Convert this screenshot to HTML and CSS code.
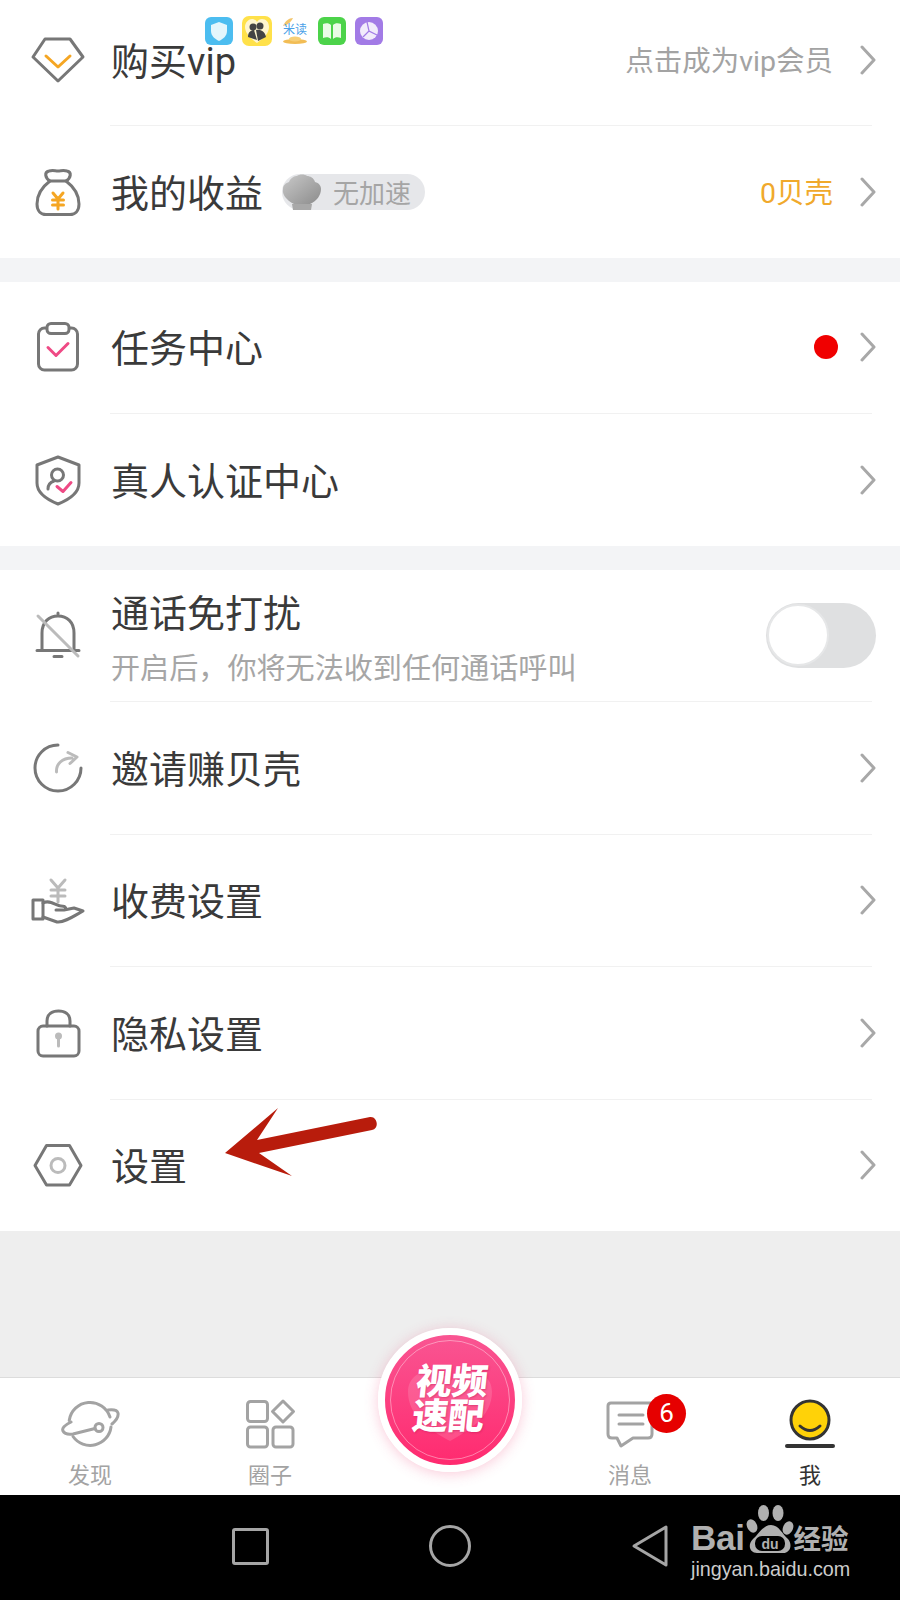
FILE: index.html
```html
<!DOCTYPE html>
<html lang="zh-CN">
<head>
    <meta charset="UTF-8">
    <meta name="viewport" content="width=device-width, initial-scale=1.0">
    <title>我</title>
    <link rel="stylesheet" href="styles.css">
</head>
<body>

<div class="page">

    <!-- iconos de apps encima de la lista -->
    <div class="app-icons">
        <svg class="app" viewBox="0 0 28 28">
            <rect width="28" height="28" rx="6" fill="#4cbdf0"/>
            <path d="M14 5 L22 8 V14 C22 19 18 22 14 24 C10 22 6 19 6 14 V8 Z" fill="#e4f6fc"/>
        </svg>
        <svg class="app app-big" viewBox="0 0 30 30">
            <rect width="30" height="30" rx="7" fill="#ffe14a"/>
            <path d="M15 27 C8 22 3 17 3 11 C3 6 7 3 10 3 C12 3 14 4 15 6 C16 4 18 3 20 3 C24 3 27 6 27 11 C27 17 22 22 15 27 Z" fill="#fff6cf"/>
            <circle cx="11" cy="11" r="3.5" fill="#444"/>
            <circle cx="18" cy="10" r="3.5" fill="#444"/>
            <path d="M6 21 C6 16 9 14 12 14 L15 24 Z M14 14 C18 13 23 15 24 21 L16 25 Z" fill="#444"/>
        </svg>
        <div class="app-midu">
            <svg class="midu-art" viewBox="0 0 28 28">
                <path d="M2 9 C4 4 8 1 12 1 C10 5 7 8 2 9 Z" fill="#f3c56b"/>
                <ellipse cx="14" cy="24.5" rx="12" ry="2.5" fill="#f2bd55"/>
                <ellipse cx="14" cy="22" rx="6" ry="2.5" fill="#f7cf77"/>
            </svg>
            <span class="midu-text">米读</span>
        </div>
        <svg class="app" viewBox="0 0 28 28">
            <rect width="28" height="28" rx="6" fill="#4cd34a"/>
            <path d="M5 7 C8 6 11 6 13 8 V22 C11 20 8 20 5 21 Z M23 7 C20 6 17 6 15 8 V22 C17 20 20 20 23 21 Z" fill="#eafbe6"/>
        </svg>
        <svg class="app" viewBox="0 0 28 28">
            <rect width="28" height="28" rx="6" fill="#a27be6"/>
            <circle cx="14" cy="14" r="9" fill="#f1ebfb"/>
            <path d="M12 5 L14 14 L22 18 M14 14 L8 20" fill="none" stroke="#a27be6" stroke-width="1.2"/>
        </svg>
    </div>

    <section class="group">
        <div class="row row-first">
            <svg class="icon" viewBox="0 0 60 60">
                <path class="st" d="M17 9 H42 L55 27 L30 51 L5 27 Z"/>
                <path class="st-orange" d="M18 26 L30 37 L42 26"/>
            </svg>
            <span class="title">购买vip</span>
            <span class="extra">点击成为vip会员</span>
            <svg class="chevron" viewBox="0 0 16 30"><path d="M2 2 L14 15 L2 28"/></svg>
        </div>
        <div class="divider"></div>
        <div class="row">
            <svg class="icon" viewBox="0 0 60 60">
                <path class="st" d="M22 19 C17 16 16 10 21 9 C25 8 27 9 30 9 C33 9 35 8 39 9 C44 10 43 16 38 19 Z"/>
                <path class="st" d="M22 19 C14 25 9 32 9 42 C9 49 13 52.5 18 52.5 H42 C47 52.5 51 49 51 42 C51 32 46 25 38 19"/>
                <path class="st-orange" d="M25 31 L30 37 L35 31 M30 37 V47 M24.5 38 H35.5 M24.5 43 H35.5"/>
            </svg>
            <span class="title">我的收益</span>
            <span class="pill">
                <svg class="shell" viewBox="0 0 40 38">
                    <defs>
                        <linearGradient id="shell-fill" x1="0" y1="0" x2="1" y2="1">
                            <stop offset="0" stop-color="#c9c9c9"/>
                            <stop offset="1" stop-color="#8c8c8c"/>
                        </linearGradient>
                    </defs>
                    <path d="M10 31 H30 L29 37 H11 Z" fill="#a8a8a8"/>
                    <path d="M12 31 C4 27 0 21 1 16 C1 12 4 10 7 9 C9 4 13 3 15 3 C17 1 23 1 25 3 C28 3 32 5 33 9 C37 10 39 13 39 16 C39 22 35 28 28 31 Z" fill="url(#shell-fill)"/>
                </svg>
                <span class="pill-text">无加速</span>
            </span>
            <span class="extra extra-gold">0贝壳</span>
            <svg class="chevron" viewBox="0 0 16 30"><path d="M2 2 L14 15 L2 28"/></svg>
        </div>
    </section>

    <section class="group">
        <div class="row">
            <svg class="icon" viewBox="0 0 60 60">
                <rect class="st" x="10.5" y="11" width="39" height="42" rx="6"/>
                <rect class="st st-white" x="19" y="6.5" width="22" height="10" rx="4"/>
                <path class="st-pink" d="M20 30.5 L28 38.5 L40 26.5"/>
            </svg>
            <span class="title">任务中心</span>
            <span class="red-dot"></span>
            <svg class="chevron" viewBox="0 0 16 30"><path d="M2 2 L14 15 L2 28"/></svg>
        </div>
        <div class="divider"></div>
        <div class="row">
            <svg class="icon" viewBox="0 0 60 60">
                <path class="st" d="M30 7 L51 15 V33 C51 44 40 50 30 54 C20 50 9 44 9 33 V15 Z"/>
                <circle class="st" cx="29.5" cy="25" r="6"/>
                <path class="st" d="M20 39 C20 34 23 32 26 31"/>
                <path class="st-pink" d="M29 36.5 L35 41.5 L43 32.5"/>
            </svg>
            <span class="title">真人认证中心</span>
            <span class="extra"></span>
            <svg class="chevron" viewBox="0 0 16 30"><path d="M2 2 L14 15 L2 28"/></svg>
        </div>
    </section>

    <section class="group">
        <div class="row">
            <svg class="icon" viewBox="0 0 60 60">
                <path class="st" d="M14 45.5 V28 C14 17 21 11 30 11 C39 11 46 17 46 28 V45.5"/>
                <path class="st" d="M9 45.5 H51 M26 51.5 H34 M30 8 V9"/>
                <path class="st-light" d="M10 11 L50 51"/>
            </svg>
            <div class="title-stack">
                <span class="title">通话免打扰</span>
                <span class="sub">开启后，你将无法收到任何通话呼叫</span>
            </div>
            <div class="toggle"><span class="knob"></span></div>
        </div>
        <div class="divider"></div>
        <div class="row">
            <svg class="icon" viewBox="0 0 60 60">
                <path class="st" d="M30 7 A23 23 0 1 0 53 30"/>
                <path class="st-light" d="M28.5 34 C28 26 34 20 44 20 M40 14.5 L49 19 L42 25.5"/>
            </svg>
            <span class="title">邀请赚贝壳</span>
            <span class="extra"></span>
            <svg class="chevron" viewBox="0 0 16 30"><path d="M2 2 L14 15 L2 28"/></svg>
        </div>
        <div class="divider"></div>
        <div class="row">
            <svg class="icon" viewBox="0 0 60 60">
                <path class="st-light" d="M23 10 L30 18 L37 10 M30 18 V32 M23 20 H37 M23 26 H37"/>
                <path class="st" d="M5 30 H15 V49 H5 Z"/>
                <path class="st" d="M15 33 C22 29 28 36 33 36 C38 36 39 39 36 40 H28 M36 40 L46 38 L55 41 C46 46 36 53 29 52 L15 47"/>
            </svg>
            <span class="title">收费设置</span>
            <span class="extra"></span>
            <svg class="chevron" viewBox="0 0 16 30"><path d="M2 2 L14 15 L2 28"/></svg>
        </div>
        <div class="divider"></div>
        <div class="row">
            <svg class="icon" viewBox="0 0 60 60">
                <rect class="st" x="10" y="23" width="41" height="30" rx="5"/>
                <path class="st" d="M19 23 V18 C19 11 24 8 30.5 8 C37 8 42 11 42 18 V23"/>
                <circle class="dot-light" cx="30.5" cy="33" r="3.5"/>
                <path class="st-light" d="M30.5 34 V43"/>
            </svg>
            <span class="title">隐私设置</span>
            <span class="extra"></span>
            <svg class="chevron" viewBox="0 0 16 30"><path d="M2 2 L14 15 L2 28"/></svg>
        </div>
        <div class="divider"></div>
        <div class="row">
            <svg class="icon" viewBox="0 0 60 60">
                <path class="st" d="M7 30.5 L18.5 10.5 H41.5 L53 30.5 L41.5 50 H18.5 Z"/>
                <circle class="st-light" cx="30" cy="30.5" r="7"/>
            </svg>
            <span class="title">设置</span>
            <span class="extra"></span>
            <svg class="chevron" viewBox="0 0 16 30"><path d="M2 2 L14 15 L2 28"/></svg>
        </div>
    </section>

    <div class="filler"></div>

    <!-- flecha roja puesta sobre la captura -->
    <svg class="red-arrow" viewBox="0 0 170 85">
        <path d="M5 53 L58 8 L37 40 L150 17 C157 16 160 28 152 30 L39 53 L72 76 Z"/>
    </svg>

    <nav class="tabbar">
        <div class="tab">
            <svg class="tab-icon" viewBox="0 0 60 60">
                <path class="tab-st" d="M9.2 26.5 A21 21 0 0 1 50 23"/>
                <path class="tab-st" d="M51 33 A21 21 0 0 1 13 42.5"/>
                <path class="tab-st" d="M11 28 Q1 33 3 37 Q5 41 13 40 L35 34.5 M48 16 Q57 15 58 19 Q59 24 52 30"/>
                <circle class="tab-st" cx="39" cy="33.5" r="4"/>
            </svg>
            <span class="tab-label">发现</span>
        </div>
        <div class="tab">
            <svg class="tab-icon" viewBox="0 0 60 60">
                <rect class="tab-st" x="7.5" y="7.5" width="20" height="20" rx="3"/>
                <rect class="tab-st" x="7.5" y="33" width="20" height="20" rx="3"/>
                <rect class="tab-st" x="33" y="33" width="20" height="20" rx="3"/>
                <path class="tab-st" d="M43 7 L53.5 17.5 L43 28 L32.5 17.5 Z"/>
            </svg>
            <span class="tab-label">圈子</span>
        </div>
        <div class="tab"></div>
        <div class="tab">
            <svg class="tab-icon" viewBox="0 0 60 60">
                <path class="tab-st" d="M11 9 H52 V40 Q52 44 48 44 H33 L21 52 L17 44 H12 Q8 44 8 40 V12 Q8 9 11 9 Z"/>
                <path class="tab-st" d="M19 21 H43 M19 30 H43"/>
            </svg>
            <span class="tab-label">消息</span>
            <span class="badge">6</span>
        </div>
        <div class="tab">
            <svg class="tab-icon" viewBox="0 0 60 60">
                <circle cx="30" cy="26" r="19" fill="#ffd208" stroke="#333" stroke-width="3"/>
                <path d="M20 32 Q30 41 40 32" fill="none" stroke="#333" stroke-width="3" stroke-linecap="round"/>
                <path d="M7 52 H53" stroke="#333" stroke-width="4" stroke-linecap="round"/>
            </svg>
            <span class="tab-label tab-label-on">我</span>
        </div>

        <div class="match-btn">
            <svg class="match-heart" viewBox="0 0 90 75">
                <path d="M45 73 C25 62 3 48 3 24 C3 10 14 3 25 3 C33 3 40 7 45 14 C50 7 57 3 65 3 C76 3 87 10 87 24 C87 48 65 62 45 73 Z"/>
            </svg>
            <span class="match-text">视频<br>速配</span>
        </div>
    </nav>

    <footer class="navbar">
        <div class="nav-item"><span class="nav-square"></span></div>
        <div class="nav-item"><span class="nav-circle"></span></div>
        <div class="nav-item">
            <svg class="nav-back" viewBox="0 0 38 44"><path d="M35 3 V41 L3 22 Z"/></svg>
        </div>

        <div class="watermark">
            <div class="wm-logo">
                <span class="wm-bai">Bai</span>
                <svg class="wm-paw" viewBox="0 0 48 50">
                    <ellipse cx="17.5" cy="8" rx="5.5" ry="8"/>
                    <ellipse cx="32" cy="8" rx="5.5" ry="8"/>
                    <ellipse cx="6" cy="21" rx="5" ry="7" transform="rotate(-25 6 21)"/>
                    <ellipse cx="42" cy="23" rx="5" ry="7" transform="rotate(25 42 23)"/>
                    <path d="M25 20 C33 20 36 29 42 34 C47 40 44 48 37 48 H11 C4 48 1 40 7 34 C13 29 17 20 25 20 Z"/>
                    <rect class="wm-hole" x="9" y="31" width="30" height="15" rx="7"/>
                    <text class="wm-du" x="24" y="43.5">du</text>
                </svg>
                <span class="wm-cn">经验</span>
            </div>
            <div class="wm-url">jingyan.baidu.com</div>
        </div>
    </footer>
</div>

</body>
</html>
```

FILE: styles.css
```css
body {
    margin: 0;
    font-family: Roboto, "Noto Sans CJK SC", "Noto Sans", sans-serif;
    background: #fff;
}

.page {
    position: relative;
    width: 900px;
    height: 1600px;
    display: flex;
    flex-direction: column;
    overflow: hidden;
    background: #f3f4f6;
}

/* lista */
.group {
    background: #fff;
    margin-bottom: 24px;
}

.group:nth-of-type(3) {
    margin-bottom: 0;
}

.row {
    box-sizing: border-box;
    height: 131.5px;
    display: flex;
    align-items: center;
    padding: 0 24px 0 28px;
}

.row > .title {
    margin-top: 4px;
}

.row-first {
    height: 125px;
    padding-bottom: 6px;
}

.divider {
    height: 1px;
    margin: 0 28px 0 110px;
    background: #f1f1f1;
}

.icon {
    width: 60px;
    height: 60px;
    margin-right: 23px;
    flex: none;
}

.st {
    fill: none;
    stroke: #777;
    stroke-width: 3;
    stroke-linejoin: round;
    stroke-linecap: round;
}

.st-white {
    fill: #fff;
}

.st-light {
    fill: none;
    stroke: #bbb;
    stroke-width: 3;
    stroke-linecap: round;
    stroke-linejoin: round;
}

.dot-light {
    fill: #bbb;
}

.st-orange {
    fill: none;
    stroke: #f5a623;
    stroke-width: 3;
    stroke-linecap: round;
    stroke-linejoin: round;
}

.st-pink {
    fill: none;
    stroke: #ef4a85;
    stroke-width: 3;
    stroke-linecap: round;
    stroke-linejoin: round;
}

.title {
    font-size: 38px;
    line-height: 50px;
    color: #3a3a3a;
    white-space: nowrap;
}

.title-stack {
    display: flex;
    flex-direction: column;
    flex: 1;
    margin-top: 7px;
}

.sub {
    font-size: 29.1px;
    line-height: 40px;
    margin-top: 10px;
    color: #a6a6a6;
    white-space: nowrap;
}

.extra {
    margin-left: auto;
    margin-bottom: 2px;
    font-size: 28.5px;
    color: #a3a3a3;
    white-space: nowrap;
}

.extra-gold {
    color: #f0a92c;
}

.chevron {
    width: 16px;
    height: 30px;
    margin-left: 27px;
    flex: none;
}

.chevron path {
    fill: none;
    stroke: #a8a8a8;
    stroke-width: 3;
    stroke-linecap: round;
    stroke-linejoin: round;
}

.red-dot {
    width: 24px;
    height: 24px;
    margin-left: auto;
    margin-right: -5px;
    border-radius: 50%;
    background: #f00000;
}

.pill {
    display: flex;
    align-items: center;
    height: 36px;
    margin-left: 19px;
    padding-right: 14px;
    border-radius: 18px;
    background: #e6e7ea;
}

.shell {
    width: 40px;
    height: 38px;
    margin-right: 11px;
}

.pill-text {
    font-size: 26px;
    color: #a5a5a5;
}

.toggle {
    width: 110px;
    height: 65px;
    border-radius: 33px;
    background: #dfe0e1;
    display: flex;
    align-items: center;
    padding-left: 1px;
    box-sizing: border-box;
}

.knob {
    width: 58px;
    height: 58px;
    border-radius: 50%;
    background: #fff;
    border: 2px solid #e6e7e8;
}

.filler {
    flex: 1;
    background: #eeeeee;
}

.red-arrow {
    position: absolute;
    left: 220px;
    top: 1100px;
    width: 170px;
    height: 85px;
}

.red-arrow path {
    fill: #b81c0c;
}

/* iconos de apps */
.app-icons {
    position: absolute;
    left: 205px;
    top: 16px;
    display: flex;
    align-items: center;
    gap: 9px;
}

.app {
    width: 28px;
    height: 28px;
}

.app-big {
    width: 30px;
    height: 30px;
}

.app-midu {
    position: relative;
    width: 28px;
    height: 28px;
}

.midu-art {
    width: 28px;
    height: 28px;
}

.midu-text {
    position: absolute;
    left: 2px;
    top: 7px;
    font-size: 12px;
    line-height: 13px;
    color: #4a9fe8;
    white-space: nowrap;
}

/* barra inferior */
.tabbar {
    position: relative;
    height: 117px;
    display: grid;
    grid-template-columns: repeat(5, 180px);
    background: #fff;
    border-top: 1px solid #dcdcdc;
}

.tab {
    position: relative;
    display: flex;
    flex-direction: column;
    align-items: center;
    padding-top: 16px;
}

.tab-icon {
    width: 60px;
    height: 60px;
}

.tab-st {
    fill: none;
    stroke: #a3a3a3;
    stroke-width: 3;
    stroke-linejoin: round;
    stroke-linecap: round;
}

.tab-label {
    margin-top: 7px;
    font-size: 22px;
    line-height: 30px;
    color: #a3a3a3;
}

.tab-label-on {
    color: #333;
}

.badge {
    position: absolute;
    left: 107px;
    top: 16px;
    width: 39px;
    height: 39px;
    line-height: 39px;
    text-align: center;
    border-radius: 50%;
    background: #e60000;
    color: #fff;
    font-size: 26px;
}

.match-btn {
    position: absolute;
    left: 378px;
    top: -50px;
    width: 130px;
    height: 130px;
    border-radius: 50%;
    border: 7px solid #fff;
    background: linear-gradient(#f95592, #ff2a6f);
    box-shadow: 0 2px 14px rgba(240, 80, 130, 0.3);
    display: flex;
    align-items: center;
    justify-content: center;
}

.match-btn::before {
    content: "";
    position: absolute;
    left: 5px;
    top: 5px;
    right: 5px;
    bottom: 5px;
    border-radius: 50%;
    border: 1.5px solid rgba(255, 255, 255, 0.4);
}

.match-heart {
    position: absolute;
    left: 20px;
    top: 33px;
    width: 90px;
    height: 75px;
}

.match-heart path {
    fill: rgba(255, 255, 255, 0.14);
}

.match-text {
    position: relative;
    font-size: 36px;
    line-height: 35px;
    font-weight: 900;
    color: #fff;
    text-align: center;
    transform: skewX(-6deg);
    text-shadow: 1px 1px 2px rgba(180, 20, 80, 0.4);
}

/* barra del sistema */
.navbar {
    position: relative;
    height: 105px;
    display: grid;
    grid-template-columns: repeat(3, 200px);
    justify-content: center;
    background: #000;
}

.nav-item {
    display: flex;
    align-items: center;
    justify-content: center;
    padding-bottom: 3px;
}

.nav-square {
    width: 31px;
    height: 31px;
    border: 3px solid #a5a5a5;
    border-radius: 3px;
}

.nav-circle {
    width: 36px;
    height: 36px;
    border: 3px solid #a5a5a5;
    border-radius: 50%;
}

.nav-back {
    width: 38px;
    height: 44px;
}

.nav-back path {
    fill: none;
    stroke: #a5a5a5;
    stroke-width: 3;
    stroke-linejoin: round;
}

/* marca de agua */
.watermark {
    position: absolute;
    left: 691px;
    top: 10px;
    color: #b0b0b0;
}

.wm-logo {
    display: flex;
    align-items: flex-end;
    height: 50px;
}

.wm-bai {
    font-family: "Liberation Sans", sans-serif;
    font-weight: bold;
    font-size: 35px;
    line-height: 34px;
    letter-spacing: -0.3px;
}

.wm-paw {
    width: 48px;
    height: 50px;
    flex: none;
    margin-left: 1px;
}

.wm-paw ellipse,
.wm-paw path {
    fill: #b0b0b0;
}

.wm-hole {
    fill: #000;
}

.wm-du {
    font-family: "Liberation Sans", sans-serif;
    font-size: 14px;
    font-weight: bold;
    text-anchor: middle;
    fill: #b0b0b0;
}

.wm-cn {
    font-size: 27.5px;
    line-height: 30px;
    font-weight: 700;
    white-space: nowrap;
}

.wm-url {
    font-family: "Liberation Sans", sans-serif;
    font-size: 19.75px;
    line-height: 24px;
    margin-top: 2px;
    color: #ccc;
    white-space: nowrap;
}
```
